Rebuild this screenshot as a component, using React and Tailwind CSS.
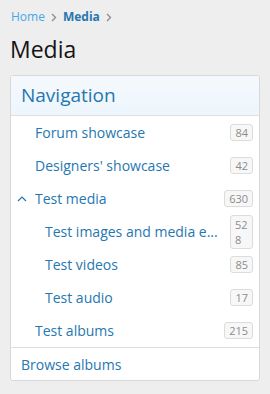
const items = [
  { label: "Forum showcase", count: "84", level: 1 },
  { label: "Designers' showcase", count: "42", level: 1 },
  { label: "Test media", count: "630", level: 1, open: true },
  { label: "Test images and media e...", count: "528", level: 2, wrap: true },
  { label: "Test videos", count: "85", level: 2 },
  { label: "Test audio", count: "17", level: 2 },
  { label: "Test albums", count: "215", level: 1 },
];

const Caret = () => (
  <svg width="10" height="10" viewBox="0 0 10 10" className="absolute left-[-18px] top-[5px]">
    <path d="M1 7 L5 3 L9 7" fill="none" stroke="#2577b1" strokeWidth="1.2" />
  </svg>
);

const Chevron = () => (
  <svg width="6" height="9" viewBox="0 0 6 9">
    <path d="M1 1 L4.5 4.5 L1 8" fill="none" stroke="#8c8c8c" strokeWidth="1.3" />
  </svg>
);

export default function App() {
  return (
    <div
      className="w-[270px] h-[394px] bg-[#eeeeee] px-[10px] pt-[10px]"
      style={{ fontFamily: '"Open Sans", "Noto Sans", sans-serif' }}
    >
      <div className="flex items-center gap-[6px] h-[14px] text-[12px] text-[#2577b1] pl-[1px]">
        <span className="text-[#47a7eb]">Home</span>
        <Chevron />
        <span className="font-bold">Media</span>
        <Chevron />
      </div>
      <h1 className="text-[23px] text-[#141414] mt-[10px] leading-[30px]">Media</h1>

      <div className="mt-[11px] bg-white border border-[#d8d8d8] rounded-[3px] overflow-hidden">
        <div className="h-[40px] px-[10px] flex items-center border-b border-[#dfdfdf] bg-gradient-to-b from-[#f5f9fd] to-[#edf6fd] text-[19px] text-[#2577b1]">
          Navigation
        </div>
        <div>
          {items.map((it) => (
            <div key={it.label} className="flex items-center justify-between h-[33px] pr-[6px]">
              <span
                className={`relative text-[14px] text-[#2577b1] ${it.level === 2 ? "pl-[34px]" : "pl-[24px]"}`}
              >
                {it.open && <span className="relative"><Caret /></span>}
                {it.label}
              </span>
              <span
                className={`border border-[#dcdcdc] bg-[#f7f7f7] rounded-[3px] text-[11px] text-[#8c8c8c] px-[4px] leading-[15px] ${it.wrap ? "w-[23px] break-all leading-[13px] py-[1px]" : ""}`}
              >
                {it.count}
              </span>
            </div>
          ))}
        </div>
        <div className="border-t border-[#dfdfdf] h-[33px] flex items-center px-[10px] text-[14px] text-[#2577b1]">
          Browse albums
        </div>
      </div>
    </div>
  );
}
